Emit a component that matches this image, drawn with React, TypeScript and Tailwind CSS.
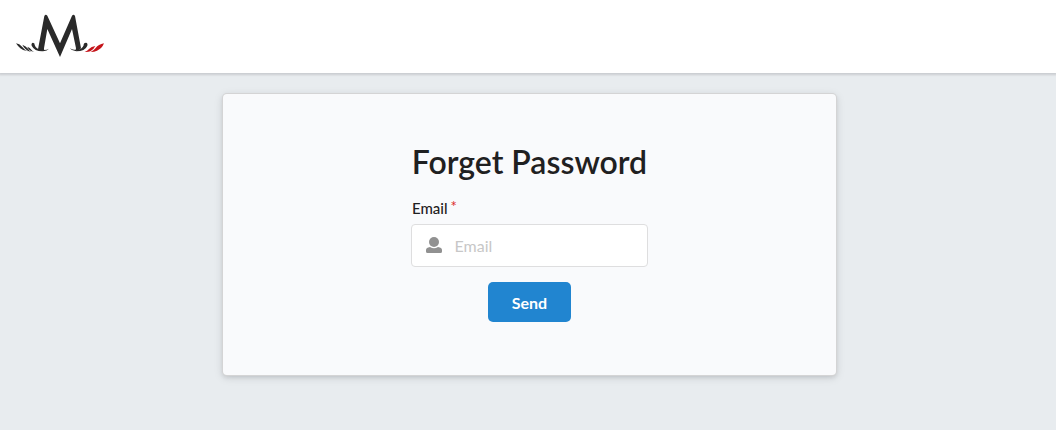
function Logo() {
  return (
    <svg className="block h-[54px] w-[100px]" viewBox="0 0 300 162" aria-label="M">
      <g fill="#2a2a2a">
        <path d="M103 24Q107 17 112 23L150 106L186 23Q191 17 195 24L213 121Q207 130 194 128Q198 126 198 121L186 63L150 147L112 63L102 121Q101 126 105 128Q95 132 84 124Z" />
        <path d="M99 130Q74 131 65 113Q63 105 69 104Q75 105 74 111Q78 124 98 126Z" />
        <path d="M199 130Q225 130 232 113Q234 105 228 104Q220 105 221 112Q217 124 199 126Z" />
        <path d="M99 130Q112 129 117 122Q109 127 99 126Z M199 130Q186 129 179 121Q188 126 199 126Z" />
        <path d="M18 106Q28 107 37 117Q44 126 53 130Q40 129 31 121Q23 114 18 106Z" />
        <path d="M37 110Q48 114 54 122Q58 129 64 132Q53 130 47 124Q40 117 37 110Z" />
        <path d="M52 116Q60 119 64 125Q68 130 73 132Q64 131 59 127Q54 121 52 116Z" />
      </g>
      <g fill="#c5141a">
        <path d="M282 106Q276 122 261 128Q253 132 242 132Q251 128 257 120Q265 109 282 106Z" />
        <path d="M256 114Q250 126 241 130Q233 133 224 132Q232 129 237 123Q244 116 256 114Z" />
      </g>
    </svg>
  );
}

export default function App() {
  return (
    <div className="min-h-[430px] bg-[#e8ecef] font-[Lato,sans-serif] text-[#1f2021]">
      <header className="h-[73px] bg-white pt-2 pl-2.5 shadow-[0_1px_2px_1px_rgba(34,36,38,0.15)]">
        <Logo />
      </header>
      <main className="flex justify-center pt-[21px] pl-[3px]">
        <form
          className="flex h-[281px] w-[613px] flex-col items-center rounded-[4px] bg-[#f9fafc] pt-[47px] shadow-[0_0_0_1px_#d4d4d5,0_2px_4px_0_rgba(34,36,38,0.12),0_2px_10px_0_rgba(34,36,38,0.15)]"
          onSubmit={(event) => event.preventDefault()}
        >
          <div className="flex w-[237px] flex-col">
            <h1 className="text-center text-[32px] leading-[41px] font-semibold whitespace-nowrap">Forget Password</h1>
            <label htmlFor="email" className="mt-[16px] flex h-[20px] pl-px text-[15px] leading-[20px] font-medium">
              Email<span className="-mt-[2px] ml-[3px] font-normal text-[#db2828]">*</span>
            </label>
            <div className="mt-[6px] flex h-[43px] items-center rounded-[4px] border border-[#dededf] bg-white">
              <svg className="-mt-[2px] ml-[14px] h-[16px] w-[16px] shrink-0" viewBox="0 0 16 16" fill="#919191">
                <circle cx="8" cy="5" r="5" />
                <path d="M4 10Q8 12.5 12 10Q16 10.5 16 13V14.5Q16 16 14.5 16H1.5Q0 16 0 14.5V13Q0 10.5 4 10Z" />
              </svg>
              <input
                id="email"
                type="email"
                placeholder="Email"
                className="ml-[12.5px] min-w-0 flex-1 bg-transparent text-[16px] outline-none placeholder:text-[#c7c7c7]"
              />
            </div>
            <button className="mt-[15px] h-[40px] w-[83px] self-center rounded-[5px] bg-[#2185d0] pt-[2px] text-[16px] font-bold text-white">
              Send
            </button>
          </div>
        </form>
      </main>
    </div>
  );
}
